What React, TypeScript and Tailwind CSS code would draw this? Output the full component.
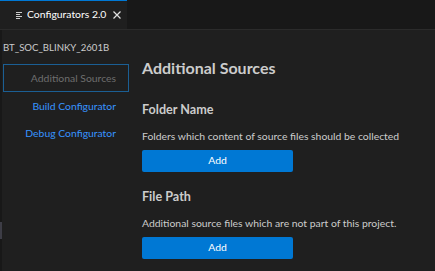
import { ReactNode } from "react";

function NavItem({ label, selected }: { label: string; selected?: boolean }) {
  return (
    <div
      className={`flex items-center justify-end pr-[12px] text-[10.4px] leading-[14px] whitespace-nowrap ${
        selected
          ? "h-[28px] border border-[#1b5f94] text-[#6e6e6e]"
          : "h-[27px] border border-transparent text-[#3794ff]"
      }`}
    >
      {label}
    </div>
  );
}

function Section({ title, desc }: { title: string; desc: string }) {
  return (
    <div className="flex flex-col">
      <div className="text-[12.6px] font-bold text-[#cccccc] leading-[16px] whitespace-nowrap">{title}</div>
      <div className="mt-[11px] text-[10.4px] text-[#cccccc] leading-[14px] whitespace-nowrap">{desc}</div>
      <button className="mt-[7px] w-[151px] h-[22px] rounded-[2px] bg-[#0078d4] text-white text-[10.4px] flex items-center justify-center">
        Add
      </button>
    </div>
  );
}

function Tab({ children }: { children: ReactNode }) {
  return (
    <div className="w-[127px] h-full bg-[#1f1f1f] border-t border-[#0078d4] flex items-center pl-[16px] text-[10.4px] text-white whitespace-nowrap">
      {children}
    </div>
  );
}

export default function App() {
  return (
    <div
      className="w-[435px] h-[271px] bg-[#1f1f1f] flex flex-col overflow-hidden"
      style={{ fontFamily: 'Lato, "Noto Sans", sans-serif' }}
    >
      <div className="h-[30px] bg-[#181818] border-b border-[#2b2b2b] flex">
        <Tab>
          <svg width="6" height="7" viewBox="0 0 6 7" className="text-[#cccccc]">
            <path d="M0 0.5h6M0 2.5h4M0 4.5h6M0 6.5h4" stroke="currentColor" strokeWidth="1" />
          </svg>
          <span className="ml-[5px]">Configurators 2.0</span>
          <svg width="8" height="8" viewBox="0 0 8 8" className="ml-[7px] text-[#e0e0e0]">
            <path d="M0.5 0.5l7 7M7.5 0.5l-7 7" stroke="currentColor" strokeWidth="1.2" />
          </svg>
        </Tab>
      </div>
      <div className="flex-1 flex">
        <div className="w-[2px] bg-[#181818] relative">
          <div className="absolute left-0 top-[192px] w-[2px] h-[17px] bg-[#3d3d46]" />
        </div>
        <div className="w-[126px] ml-[1px] flex flex-col">
          <div className="pt-[11px] h-[34px] text-[9.6px] text-[#cccccc] leading-[14px] whitespace-nowrap">
            BT_SOC_BLINKY_2601B
          </div>
          <div className="flex flex-col">
            <NavItem label="Additional Sources" selected />
            <NavItem label="Build Configurator" />
            <NavItem label="Debug Configurator" />
          </div>
        </div>
        <div className="flex-1 pl-[13px] pt-[28px] flex flex-col">
          <div className="text-[16px] font-bold text-[#cccccc] leading-[20px] whitespace-nowrap">Additional Sources</div>
          <div className="mt-[24px] flex flex-col gap-[17px]">
            <Section title="Folder Name" desc="Folders which content of source files should be collected" />
            <Section title="File Path" desc="Additional source files which are not part of this project." />
          </div>
        </div>
      </div>
    </div>
  );
}
